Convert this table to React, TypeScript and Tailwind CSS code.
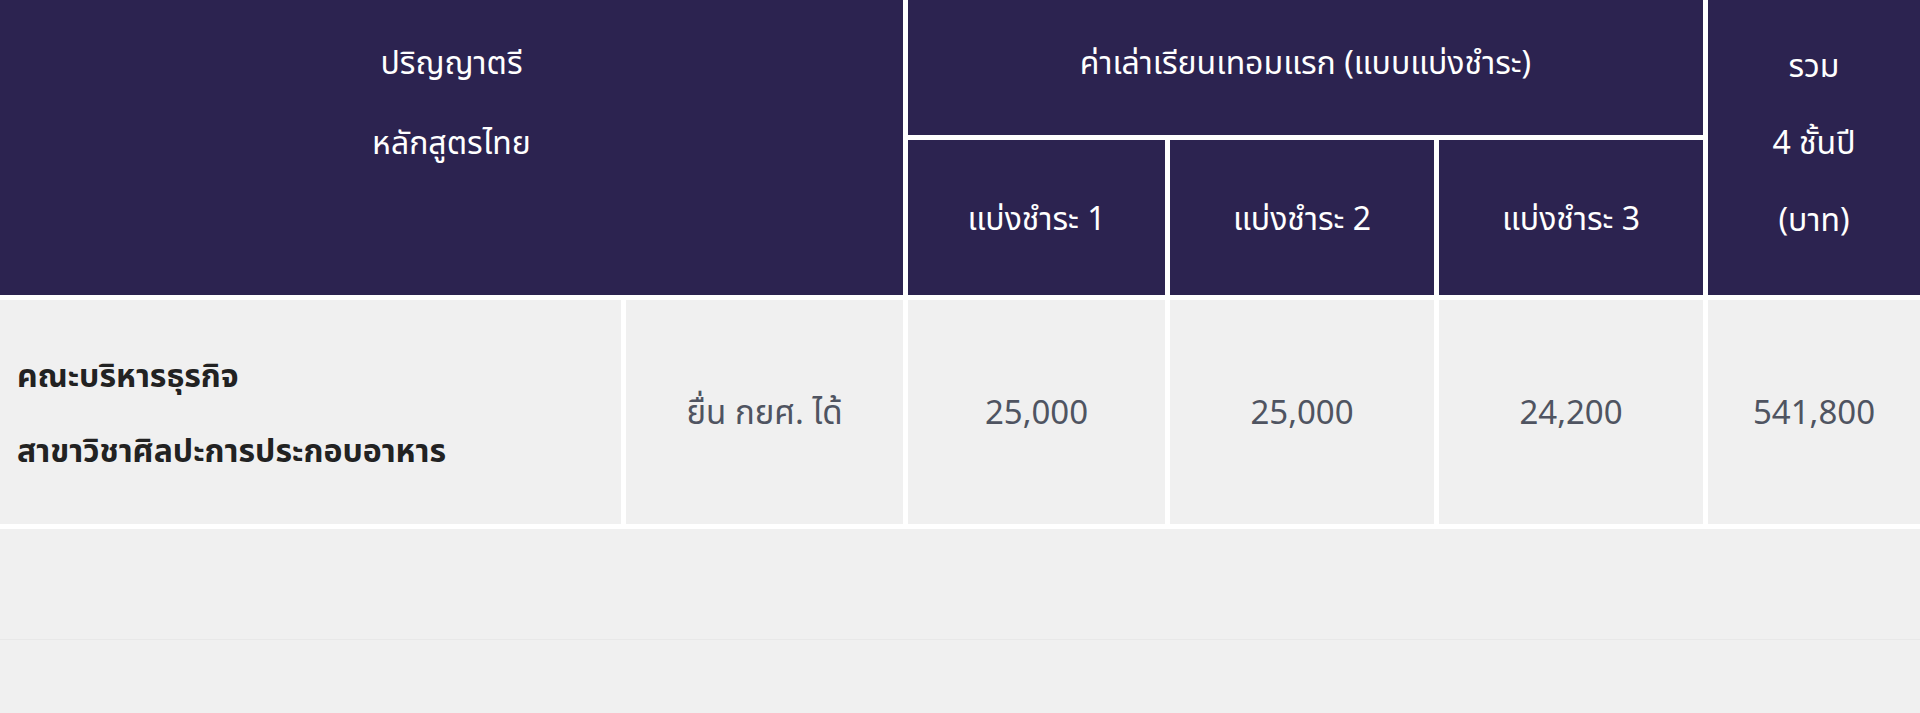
export default function App() {
  const head = "bg-[#2c2350] text-white text-[32px] font-normal";
  const cell = "bg-[#f0f0f0] flex items-center justify-center text-[33px] text-[#4f5461]";

  return (
    <div
      className="min-h-screen w-full bg-[#f0f0f0] overflow-hidden"
      style={{ fontFamily: '"Noto Sans", "Noto Sans Thai", "Noto Sans CJK SC", sans-serif' }}
    >
      <div className="grid grid-cols-[621px_277px_257px_264px_264px_1fr] grid-rows-[135px_155px_224px] gap-[5px] bg-white pb-[5px]">
        {/* header */}
        <div className={`${head} col-span-2 row-span-2 flex flex-col items-center pt-[39px] gap-[34px] leading-[46px]`}>
          <p>ปริญญาตรี</p>
          <p>หลักสูตรไทย</p>
        </div>
        <div className={`${head} col-span-3 flex justify-center pt-[39px] leading-[46px]`}>
          ค่าเล่าเรียนเทอมแรก (แบบแบ่งชำระ)
        </div>
        <div className={`${head} row-span-2 flex flex-col items-center pt-[26px] leading-[77px]`}>
          <p>รวม</p>
          <p>4 ชั้นปี</p>
          <p>(บาท)</p>
        </div>
        <div className={`${head} flex items-center justify-center`}>แบ่งชำระ 1</div>
        <div className={`${head} flex items-center justify-center`}>แบ่งชำระ 2</div>
        <div className={`${head} flex items-center justify-center`}>แบ่งชำระ 3</div>

        {/* data row */}
        <div className="bg-[#f0f0f0] flex flex-col justify-center gap-[29px] pl-[17px] text-[32px] font-bold text-[#222222] leading-[46px]">
          <p>คณะบริหารธุรกิจ</p>
          <p>สาขาวิชาศิลปะการประกอบอาหาร</p>
        </div>
        <div className={`${cell} text-[32px] text-[#2e2e2e]`}>ยื่น กยศ. ได้</div>
        <div className={cell}>25,000</div>
        <div className={cell}>25,000</div>
        <div className={cell}>24,200</div>
        <div className={cell}>541,800</div>
      </div>

      <div className="h-[111px] border-b border-[#e8e8e8]" />
    </div>
  );
}
